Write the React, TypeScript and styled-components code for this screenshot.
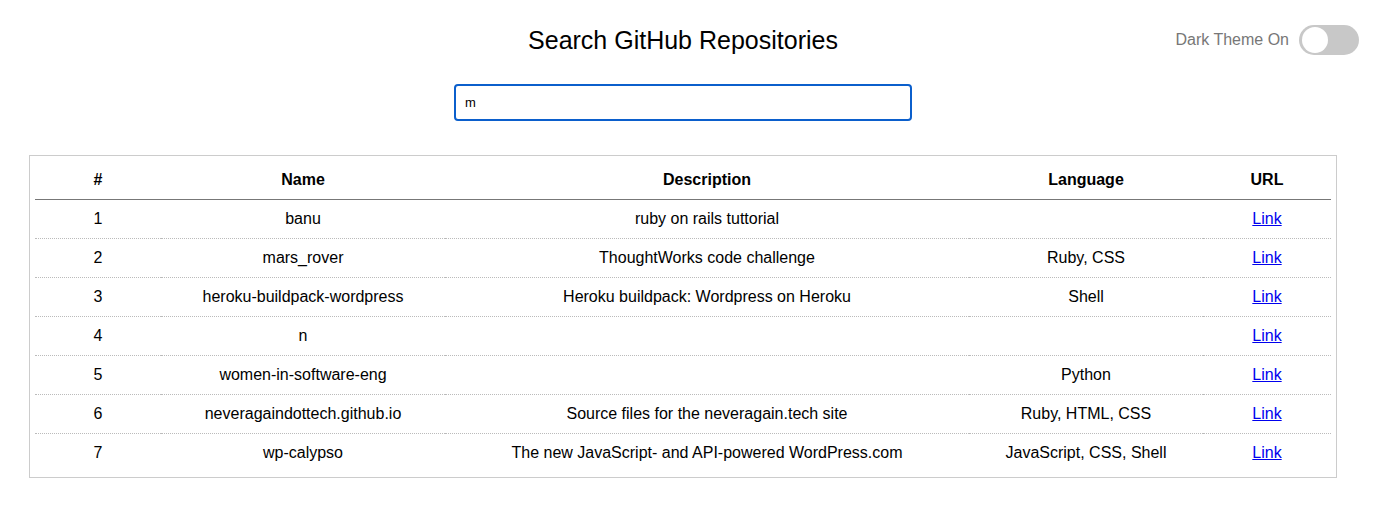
import React from "react";
import styled, { createGlobalStyle } from "styled-components";

const Global = createGlobalStyle`
  html, body { margin: 0; padding: 0; background: #fff; }
  body { font-family: "Liberation Sans", Arial, sans-serif; color: #000; }
`;

const Page = styled.div`
  width: 1366px;
  padding-top: 20px;
  display: flex;
  flex-direction: column;
  align-items: center;
`;

const Header = styled.header`
  width: 100%;
  height: 40px;
  display: grid;
  grid-template-columns: 1fr auto 1fr;
  align-items: center;
`;

const Title = styled.h1`
  grid-column: 2;
  margin: 0;
  font-size: 25px;
  font-weight: normal;
  line-height: 28px;
`;

const ToggleWrap = styled.label`
  grid-column: 3;
  justify-self: end;
  margin-right: 7px;
  display: flex;
  align-items: center;
  gap: 10px;
  color: #777;
  font-size: 16px;
`;

const Track = styled.span<{ $on: boolean }>`
  width: 60px;
  height: 30px;
  border-radius: 15px;
  background: ${(p) => (p.$on ? "#2196f3" : "#c8c8c8")};
  display: flex;
  align-items: center;
  padding: 0 3px;
  box-sizing: border-box;
  justify-content: ${(p) => (p.$on ? "flex-end" : "flex-start")};
`;

const Knob = styled.span`
  width: 26px;
  height: 26px;
  border-radius: 50%;
  background: #fff;
`;

const SearchInput = styled.input`
  margin-top: 24px;
  width: 458px;
  height: 37px;
  box-sizing: border-box;
  border: 2px solid #0b5fcc;
  border-radius: 4px;
  padding: 0 9px;
  font-family: "Liberation Sans", Arial, sans-serif;
  font-size: 13px;
  color: #000;
  outline: none;
`;

const TableBox = styled.div`
  margin-top: 34px;
  width: 1308px;
  box-sizing: border-box;
  border: 1px solid #ccc;
  padding: 5px;
`;

const Table = styled.table`
  width: 100%;
  border-collapse: collapse;
  table-layout: fixed;
  font-size: 16px;
`;

const Th = styled.th`
  height: 38px;
  font-weight: bold;
  text-align: center;
  border-bottom: 1px solid #777;
  padding: 0;
`;

const Tr = styled.tr`
  & + & td { border-top: 1px dotted #bbb; }
`;

const Td = styled.td`
  height: 38px;
  text-align: center;
  padding: 0;
`;

const A = styled.a`
  color: #0000ee;
  text-decoration: underline;
`;

const rows = [
  ["banu", "ruby on rails tuttorial", ""],
  ["mars_rover", "ThoughtWorks code challenge", "Ruby, CSS"],
  ["heroku-buildpack-wordpress", "Heroku buildpack: Wordpress on Heroku", "Shell"],
  ["n", "", ""],
  ["women-in-software-eng", "", "Python"],
  ["neveragaindottech.github.io", "Source files for the neveragain.tech site", "Ruby, HTML, CSS"],
  ["wp-calypso", "The new JavaScript- and API-powered WordPress.com", "JavaScript, CSS, Shell"],
];

const widths = [126, 284, 524, 234, 128];

export default function App() {
  return (
    <>
      <Global />
      <Page>
        <Header>
          <Title>Search GitHub Repositories</Title>
          <ToggleWrap>
            Dark Theme On
            <Track $on={false}>
              <Knob />
            </Track>
          </ToggleWrap>
        </Header>
        <SearchInput defaultValue="m" autoFocus />
        <TableBox>
          <Table>
            <colgroup>
              {widths.map((w, i) => (
                <col key={i} style={{ width: w }} />
              ))}
            </colgroup>
            <thead>
              <tr>
                <Th>#</Th>
                <Th>Name</Th>
                <Th>Description</Th>
                <Th>Language</Th>
                <Th>URL</Th>
              </tr>
            </thead>
            <tbody>
              {rows.map((r, i) => (
                <Tr key={i}>
                  <Td>{i + 1}</Td>
                  <Td>{r[0]}</Td>
                  <Td>{r[1]}</Td>
                  <Td>{r[2]}</Td>
                  <Td>
                    <A href="#">Link</A>
                  </Td>
                </Tr>
              ))}
            </tbody>
          </Table>
        </TableBox>
      </Page>
    </>
  );
}
